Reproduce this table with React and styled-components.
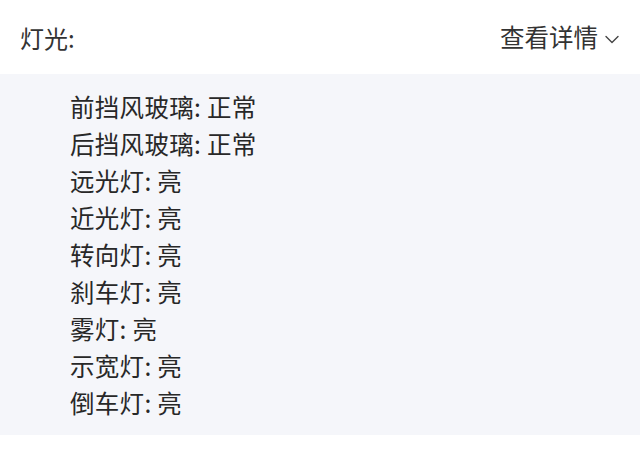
import React from 'react';
import styled, { createGlobalStyle } from 'styled-components';

const GlobalStyle = createGlobalStyle`
  html, body {
    margin: 0;
    padding: 0;
    background: #ffffff;
  }
  body {
    font-family: "Noto Sans CJK SC", "Noto Sans", sans-serif;
    color: #333333;
  }
`;

const lights = [
  { name: '前挡风玻璃', value: '正常' },
  { name: '后挡风玻璃', value: '正常' },
  { name: '远光灯', value: '亮' },
  { name: '近光灯', value: '亮' },
  { name: '转向灯', value: '亮' },
  { name: '刹车灯', value: '亮' },
  { name: '雾灯', value: '亮' },
  { name: '示宽灯', value: '亮' },
  { name: '倒车灯', value: '亮' },
];

export default function App() {
  return (
    <>
      <GlobalStyle />
      <Section>
        <Header>
          <Title>灯光:</Title>
          <Toggle>
            查看详情
            <svg width="14" height="9" viewBox="0 0 14 9" fill="none">
              <path
                d="M1 1.5 L7 7.5 L13 1.5"
                stroke="#444"
                strokeWidth="1.4"
                strokeLinecap="round"
                strokeLinejoin="round"
              />
            </svg>
          </Toggle>
        </Header>
        <Panel>
          {lights.map((item) => (
            <Line key={item.name}>
              {item.name}: {item.value}
            </Line>
          ))}
        </Panel>
      </Section>
    </>
  );
}

const Section = styled.div`
  width: 640px;
  display: flex;
  flex-direction: column;
`;

const Header = styled.div`
  height: 74px;
  display: flex;
  align-items: center;
  justify-content: space-between;
  padding: 0 21px 0 20px;
  box-sizing: border-box;
`;

const Title = styled.div`
  font-size: 24px;
  line-height: 1;
  color: #333;
  margin-top: 1px;
`;

const Toggle = styled.div`
  display: flex;
  align-items: center;
  gap: 7px;
  font-size: 24.5px;
  line-height: 1;
  color: #333;
  margin-top: 1px;

  svg {
    margin-top: 4px;
  }
`;

const Panel = styled.div`
  background: #f5f6fa;
  padding: 14px 0 14px 70px;
  display: flex;
  flex-direction: column;
`;

const Line = styled.div`
  font-size: 24.5px;
  line-height: 37px;
  color: #282828;
  letter-spacing: 0.3px;
`;
